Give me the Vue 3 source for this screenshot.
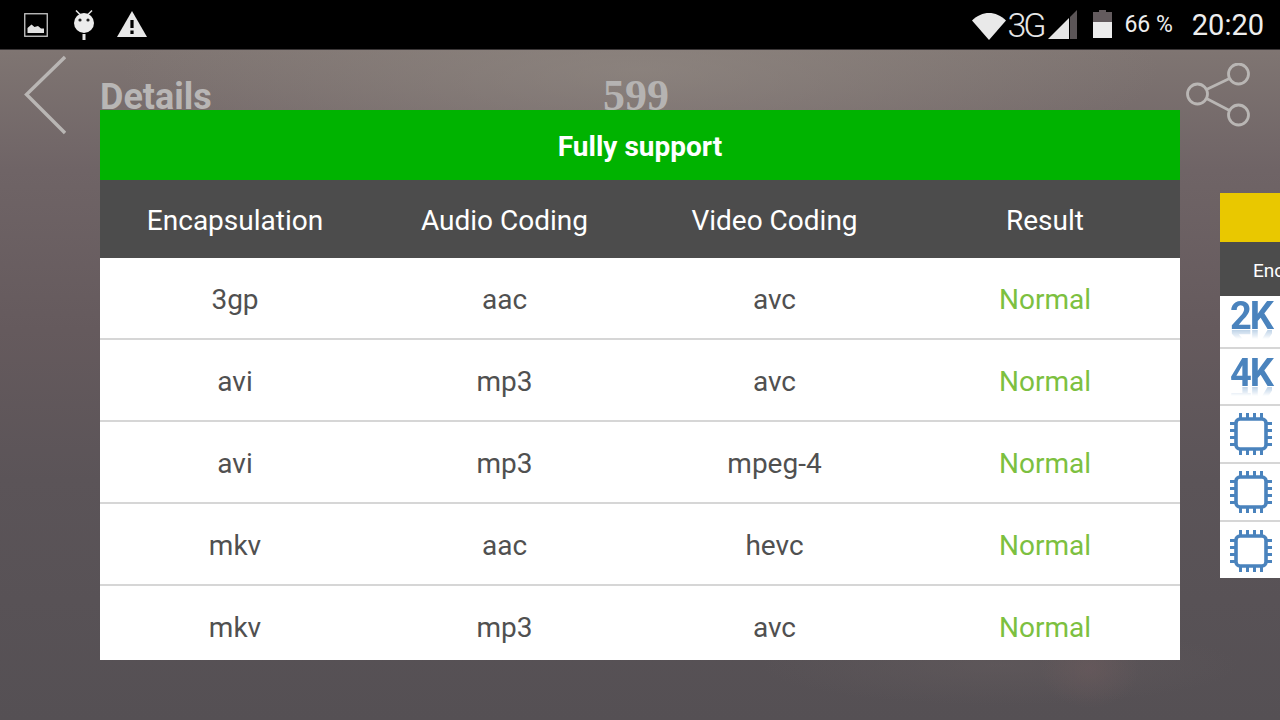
<script setup>
const rows = [
  ['3gp', 'aac', 'avc', 'Normal'],
  ['avi', 'mp3', 'avc', 'Normal'],
  ['avi', 'mp3', 'mpeg-4', 'Normal'],
  ['mkv', 'aac', 'hevc', 'Normal'],
  ['mkv', 'mp3', 'avc', 'Normal'],
]
const heads = ['Encapsulation', 'Audio Coding', 'Video Coding', 'Result']
</script>

<template>
  <div class="screen">
    <div class="status">
      <div class="status-left">
        <svg class="ic-img" width="24" height="24" viewBox="0 0 24 24">
          <rect x="0.750" y="0.750" width="22.500" height="22.500" fill="none" stroke="#c8c8c8" stroke-width="1.300" />
          <path d="M3.500 20 V15 L7.500 11.500 L10.500 14 L14 13 L17 15.500 L20 15.500 V20 Z" fill="#e2e2e2" />
        </svg>
        <svg class="ic-droid" width="20" height="30" viewBox="0 0 20 30">
          <path d="M2 0.500 L6 4.500 M18 0.500 L14 4.500" stroke="#e6e6e6" stroke-width="1.500" />
          <circle cx="10" cy="13" r="10" fill="#ececec" />
          <circle cx="6" cy="10" r="1.600" fill="#222" />
          <circle cx="14" cy="10" r="1.600" fill="#222" />
          <rect x="8.500" y="24" width="3" height="6" fill="#e6e6e6" />
        </svg>
        <svg class="ic-warn" width="30" height="26" viewBox="0 0 30 26">
          <path d="M15 0 L30 26 H0 Z" fill="#e8e8e8" />
          <rect x="13.400" y="9" width="3.200" height="8" fill="#000" />
          <rect x="13.400" y="19.500" width="3.200" height="3.500" fill="#000" />
        </svg>
      </div>
      <div class="status-right">
        <svg class="ic-wifi" width="34" height="28" viewBox="0 0 34 28">
          <path d="M0 8.500 C10 -1.500 24 -1.500 34 8.500 L17 28 Z" fill="#e9e9e9" />
        </svg>
        <span class="net">3G</span>
        <svg class="ic-signal" width="29" height="29" viewBox="0 0 29 29">
          <path d="M0 29 L21 8 V29 Z" fill="#e6e6e6" />
          <path d="M22 7 L29 0 V29 H22 Z" fill="#5b5557" />
        </svg>
        <svg class="ic-batt" width="19" height="28" viewBox="0 0 19 28">
          <path d="M6 0 H13 V2 H19 V12 H0 V2 H6 Z" fill="#635b5e" />
          <rect x="0" y="12" width="19" height="16" fill="#ececec" />
        </svg>
        <span class="pct">66 %</span>
        <span class="clock">20:20</span>
      </div>
    </div>

    <div class="header">
      <svg class="back" width="42" height="80" viewBox="0 0 42 80">
        <path d="M41 2 L2.500 39.500 L41 78" fill="none" stroke="#b9b6b4" stroke-width="3.400" />
      </svg>
      <span class="title">Details</span>
      <span class="num">599</span>
      <svg class="share" width="66" height="64" viewBox="0 0 66 64">
        <g fill="none" stroke="#b9b6b4" stroke-width="2.800">
          <circle cx="52.500" cy="11" r="10" />
          <circle cx="11.500" cy="31" r="10" />
          <circle cx="52.500" cy="52" r="10" />
          <path d="M20.500 26.500 L43.500 15.500 M20.500 35.500 L43.500 47.500" />
        </g>
      </svg>
    </div>

    <div class="dialog">
      <div class="dialog-title">Fully support</div>
      <div class="row head">
        <span v-for="h in heads" :key="h">{{ h }}</span>
      </div>
      <div class="body">
        <div v-for="(r, i) in rows" :key="i" class="row item">
          <span v-for="(c, j) in r" :key="j" :class="{ ok: j === 3 }">{{ c }}</span>
        </div>
      </div>
    </div>

    <div class="peek">
      <div class="peek-title"></div>
      <div class="peek-head">Encapsulation</div>
      <div class="peek-row tall"><span class="res">2K</span></div>
      <div class="peek-row tall2"><span class="res">4K</span></div>
      <div v-for="n in 3" :key="n" class="peek-row chip-row">
        <svg width="42" height="42" viewBox="0 0 42 42">
          <rect x="6" y="6" width="30" height="30" rx="4" fill="none" stroke="#4a83bd" stroke-width="3.600" />
          <path d="M10.500 0 V5 M17.500 0 V5 M24.500 0 V5 M31.500 0 V5 M10.500 37 V42 M17.500 37 V42 M24.500 37 V42 M31.500 37 V42 M0 10.500 H5 M0 17.500 H5 M0 24.500 H5 M0 31.500 H5 M37 10.500 H42 M37 17.500 H42 M37 24.500 H42 M37 31.500 H42" stroke="#4a83bd" stroke-width="3" />
        </svg>
      </div>
    </div>
  </div>
</template>

<style>
html, body { margin: 0; background: #000; }
</style>

<style scoped>
.screen {
  position: relative;
  width: 1280px;
  height: 720px;
  overflow: hidden;
  font-family: Roboto, "Liberation Sans", sans-serif;
  background:
    radial-gradient(ellipse 50px 40px at 1090px 668px, rgba(112, 92, 94, 0.45), rgba(112, 92, 94, 0) 100%),
    radial-gradient(ellipse 240px 40px at 1000px 665px, rgba(100, 92, 94, 0.5), rgba(100, 92, 94, 0) 100%),
    radial-gradient(ellipse 520px 110px at 640px 70px, rgba(150, 142, 135, 0.55), rgba(150, 142, 135, 0) 100%),
    linear-gradient(180deg, #7f7572 50px, #6f6466 170px, #655a5d 330px, #5b5458 480px, #555054 720px);
}
.status {
  height: 50px;
  background: #000;
  border-bottom: 1px solid #3a3637;
  box-sizing: border-box;
  display: flex;
  justify-content: space-between;
  align-items: center;
  padding: 0 16px 0 24px;
}
.status-left, .status-right { display: flex; align-items: center; }
.ic-droid { margin-left: 26px; margin-top: 1px; }
.ic-warn { margin-left: 23px; margin-top: -1px; }
.ic-wifi { margin-top: 2px; }
.net {
  margin-left: 1px;
  width: 41px;
  font-size: 34px;
  font-weight: 300;
  letter-spacing: -3px;
  color: #e6e6e6;
  line-height: 52px;
}
.ic-signal { margin-top: 0; }
.ic-batt { margin-left: 16px; margin-top: -1px; }
.pct {
  margin-left: 12px;
  font-size: 23px;
  color: #eee;
  line-height: 52px;
}
.clock {
  margin-left: 19px;
  font-size: 29px;
  color: #eee;
  line-height: 50px;
}
.header {
  position: relative;
  height: 92px;
  display: flex;
  align-items: center;
  padding: 0 28px 0 24px;
}
.back { flex: none; margin-top: -2px; }
.title {
  margin-left: 34px;
  margin-top: 2px;
  font-size: 36px;
  font-weight: 700;
  color: #b8b6b5;
}
.num {
  position: absolute;
  left: 603px;
  top: 21px;
  font-family: "Liberation Serif", serif;
  font-size: 44px;
  font-weight: 700;
  line-height: 50px;
  color: #b5b3b2;
}
.share { margin-left: auto; margin-top: -2px; }
.dialog {
  position: absolute;
  left: 100px;
  top: 110px;
  width: 1080px;
  height: 550px;
  overflow: hidden;
  background: #fff;
}
.dialog-title {
  height: 70px;
  line-height: 73px;
  background: #00b300;
  color: #fff;
  text-align: center;
  font-size: 28px;
  font-weight: 700;
}
.row {
  display: grid;
  grid-template-columns: 270px 269px 271px 270px;
  align-items: center;
  text-align: center;
}
.row span { position: relative; top: 1px; }
.head {
  height: 78px;
  background: #4c4c4c;
  color: #fff;
  font-size: 28px;
}
.item {
  height: 82px;
  box-sizing: border-box;
  border-bottom: 2px solid #d6d6d6;
  color: #505050;
  font-size: 28px;
}
.item .ok { color: #7cc040; }
.peek {
  position: absolute;
  left: 1220px;
  top: 193px;
  width: 60px;
  height: 385px;
  overflow: hidden;
  background: #fff;
}
.peek-title { height: 49px; background: #e9c800; }
.peek-head {
  height: 54px;
  line-height: 57px;
  padding-left: 33px;
  white-space: nowrap;
  background: #4c4c4c;
  color: #fff;
  font-size: 19px;
}
.peek-row {
  box-sizing: border-box;
  border-bottom: 2px solid #d6d6d6;
  display: flex;
  align-items: center;
  padding-left: 10px;
}
.tall { height: 53px; align-items: flex-start; }
.tall2 { height: 57px; align-items: flex-start; padding-top: 4px; }
.chip-row { height: 58px; }
.chip-row:last-child { border-bottom: 0; }
.res {
  font-size: 38px;
  font-weight: 700;
  line-height: 40px;
  letter-spacing: -2px;
  color: #4a83bd;
  -webkit-box-reflect: below -13px linear-gradient(transparent 60%, rgba(255, 255, 255, 0.4) 85%);
}
.chip-row svg { display: block; }
</style>
